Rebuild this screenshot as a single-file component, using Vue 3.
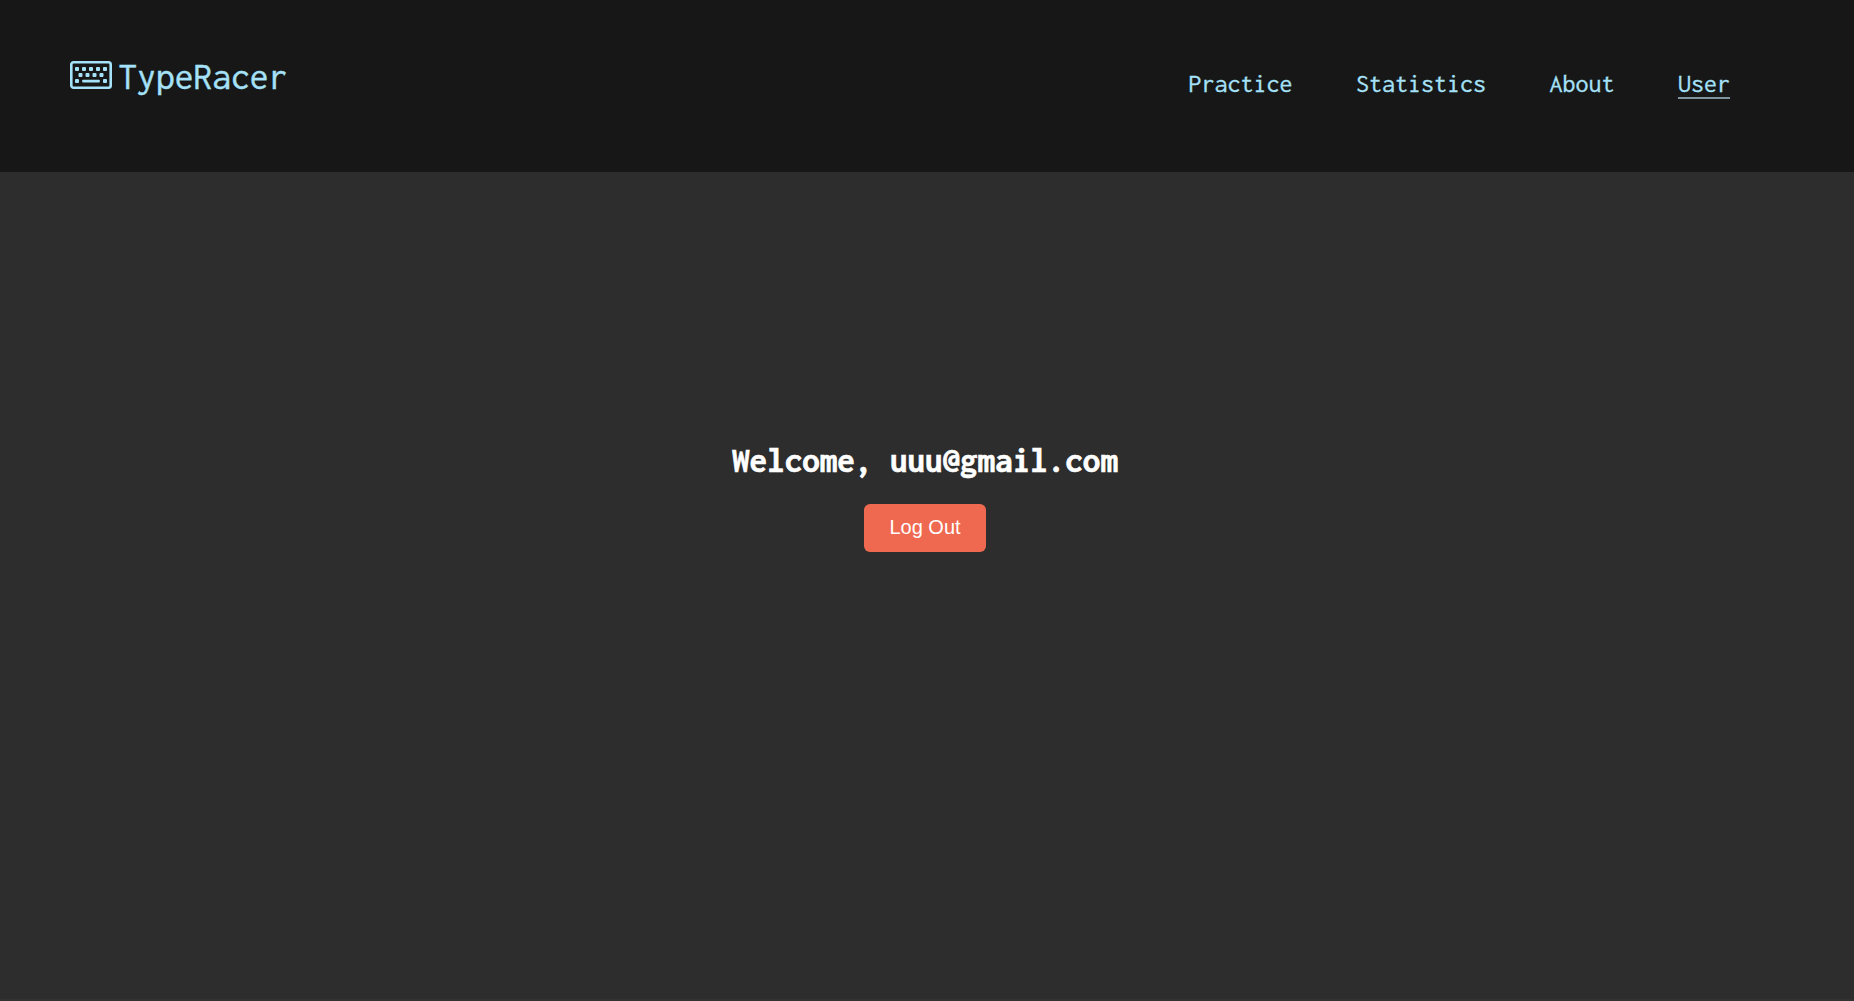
<script setup>
const links = ['Practice', 'Statistics', 'About', 'User']
const current = 'User'
const email = 'uuu@gmail.com'
</script>

<template>
  <div class="page">
    <header class="header">
      <a class="logo">
        <svg class="keyboard" viewBox="0 0 42 28" fill="currentColor">
          <rect x="1.3" y="1.3" width="39.4" height="25.4" rx="2.2" fill="none" stroke="currentColor" stroke-width="2.6" />
          <rect x="5" y="6" width="4" height="4" rx="0.9" />
          <rect x="12" y="6" width="4" height="4" rx="0.9" />
          <rect x="19" y="6" width="4" height="4" rx="0.9" />
          <rect x="26" y="6" width="4" height="4" rx="0.9" />
          <rect x="33" y="6" width="4" height="4" rx="0.9" />
          <rect x="8.5" y="12" width="4" height="4" rx="0.9" />
          <rect x="15.5" y="12" width="4" height="4" rx="0.9" />
          <rect x="22.5" y="12" width="4" height="4" rx="0.9" />
          <rect x="29.5" y="12" width="4" height="4" rx="0.9" />
          <rect x="5" y="18" width="4" height="4" rx="0.9" />
          <rect x="12.2" y="18.8" width="17.6" height="2.8" rx="0.8" />
          <rect x="33" y="18" width="4" height="4" rx="0.9" />
        </svg>
        <span class="brand">TypeRacer</span>
      </a>
      <nav class="nav">
        <a v-for="link in links" :key="link" class="link" :class="{ active: link === current }">{{ link }}</a>
      </nav>
    </header>
    <main class="main">
      <h1 class="welcome">Welcome, {{ email }}</h1>
      <button class="logout">Log Out</button>
    </main>
  </div>
</template>

<style>
body {
  margin: 0;
  background: #2d2d2d;
}
</style>

<style scoped>
.page {
  box-sizing: border-box;
  height: 100vh;
  background: #2d2d2d;
  border-bottom: 2px solid #343132;
  font-family: Inconsolata, "DejaVu Sans Mono", monospace;
  overflow: hidden;
}
.header {
  box-sizing: border-box;
  height: 172px;
  padding: 0 124px 0 70px;
  display: flex;
  justify-content: space-between;
  align-items: flex-start;
  background: #171717;
  color: #a5e1f8;
}
.logo {
  display: flex;
  align-items: flex-start;
  padding-top: 59px;
}
.keyboard {
  width: 42px;
  height: 28px;
  margin-top: 2px;
}
.brand {
  margin-left: 6.5px;
  font-size: 37.5px;
  line-height: 36px;
  -webkit-text-stroke: 0.4px currentColor;
}
.nav {
  display: flex;
  gap: 63.5px;
  padding-top: 71px;
}
.link {
  height: 26px;
  font-size: 26px;
  line-height: 26px;
  border-bottom: 2px solid transparent;
  -webkit-text-stroke: 0.3px currentColor;
}
.active {
  border-bottom-color: #7c949b;
}
.main {
  display: flex;
  flex-direction: column;
  align-items: center;
  padding: 269px 4px 0 0;
}
.welcome {
  margin: 0 0 23px;
  font-size: 35.1px;
  line-height: 40px;
  font-weight: 700;
  color: #fff;
  white-space: pre;
  -webkit-text-stroke: 0.6px currentColor;
}
.logout {
  width: 122px;
  height: 48px;
  padding: 0 0 2px;
  border: 0;
  border-radius: 6px;
  background: #ef6850;
  color: #fff;
  font-family: "Liberation Sans", Arial, sans-serif;
  font-size: 20px;
  line-height: 46px;
}
</style>
